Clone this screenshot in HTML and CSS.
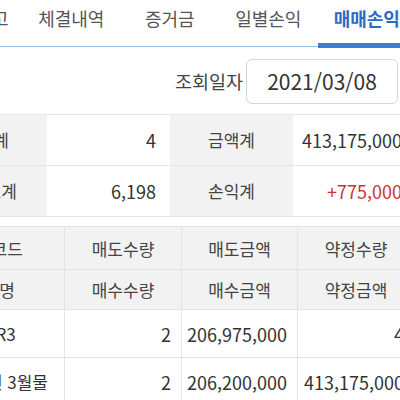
FILE: index.html
```html
<!DOCTYPE html>
<html lang="ko">
<head>
<meta charset="utf-8">
<link rel="stylesheet" href="styles.css">
</head>
<body>
<div class="page">
  <div class="tabbar">
    <div class="tabs">
      <div class="tab first">잔고</div>
      <div class="tab">체결내역</div>
      <div class="tab">증거금</div>
      <div class="tab">일별손익</div>
      <div class="tab active">매매손익</div>
    </div>
  </div>
  <div class="daterow">
    <div class="datelabel">조회일자</div>
    <div class="datebox">2021/03/08</div>
  </div>
  <div class="summary">
    <div class="s-label">수량계</div>
    <div class="s-value">4</div>
    <div class="s-label">금액계</div>
    <div class="s-value">413,175,000</div>
    <div class="s-label">수수료계</div>
    <div class="s-value">6,198</div>
    <div class="s-label">손익계</div>
    <div class="s-value profit">+775,000</div>
  </div>
  <div class="detail">
    <div class="h">종목코드</div>
    <div class="h">매도수량</div>
    <div class="h">매도금액</div>
    <div class="h">약정수량</div>
    <div class="h h2">종목명</div>
    <div class="h h2">매수수량</div>
    <div class="h h2">매수금액</div>
    <div class="h h2">약정금액</div>
    <div class="d name">101R3</div>
    <div class="d num">2</div>
    <div class="d num">206,975,000</div>
    <div class="d num">4</div>
    <div class="d name">F 2021년 3월물</div>
    <div class="d num">2</div>
    <div class="d num">206,200,000</div>
    <div class="d num">413,175,000</div>
  </div>
</div>
</body>
</html>
```
FILE: styles.css
```css
html, body {
  margin: 0;
  padding: 0;
  background: #ffffff;
}
.page {
  width: 400px;
  height: 400px;
  overflow: hidden;
  font-family: "Noto Sans CJK KR", "Noto Sans", sans-serif;
  color: #333333;
}
.tabbar {
  height: 47px;
  box-sizing: border-box;
  border-bottom: 1px solid #9dbce2;
}
.tabs {
  display: flex;
  margin-left: -38px;
  height: 46px;
}
.tab {
  flex: none;
  width: 98.5px;
  text-align: center;
  line-height: 37px;
  font-size: 18px;
  color: #555555;
  position: relative;
  white-space: nowrap;
}
.tab.first {
  width: 60px;
}
.tab.active {
  color: #2a6bc3;
  font-weight: 700;
}
.tab.active::after {
  content: "";
  position: absolute;
  left: 0;
  right: 0;
  bottom: -2px;
  height: 5px;
  background: #3d7dd2;
}
.daterow {
  display: flex;
  justify-content: flex-end;
  align-items: flex-start;
  height: 68px;
  box-sizing: border-box;
  padding-top: 12px;
  border-bottom: 1px solid #e6e6e6;
}
.datelabel {
  font-size: 18.5px;
  line-height: 45px;
  color: #444444;
  margin-right: 3px;
}
.datebox {
  width: 152px;
  height: 45px;
  box-sizing: border-box;
  border: 1px solid #d6d6d6;
  border-radius: 6px;
  margin-right: 2px;
  text-align: center;
  font-size: 21px;
  line-height: 43px;
  color: #333333;
}
.summary {
  display: grid;
  grid-template-columns: 123px 123px 123px 123px;
  margin-left: -76px;
  width: 492px;
}
.s-label, .s-value {
  height: 51px;
  box-sizing: border-box;
  border-bottom: 1px solid #e6e6e6;
  line-height: 50px;
  white-space: nowrap;
}
.s-label {
  background: #f2f2f2;
  text-align: center;
  font-size: 17px;
  color: #444444;
}
.s-value {
  text-align: right;
  padding-right: 14px;
  font-size: 18px;
  color: #333333;
}
.s-value.profit {
  color: #cc3333;
}
.detail {
  display: grid;
  grid-template-columns: 146px 117px 116px 117px;
  grid-template-rows: 43px 40px 48px 48px;
  margin-left: -81px;
  margin-top: 9px;
  width: 496px;
  border-top: 1px solid #e3e3e3;
}
.h, .d {
  box-sizing: border-box;
  border-right: 1px solid #e3e3e3;
  border-bottom: 1px solid #e3e3e3;
  display: flex;
  align-items: center;
  white-space: nowrap;
}
.h {
  background: #f2f2f2;
  justify-content: center;
  font-size: 17px;
  color: #444444;
}
.d {
  background: #ffffff;
  font-size: 18px;
  color: #333333;
}
.d.name {
  justify-content: center;
  font-size: 17px;
}
.d.num {
  justify-content: flex-end;
  padding-right: 10px;
}
```
